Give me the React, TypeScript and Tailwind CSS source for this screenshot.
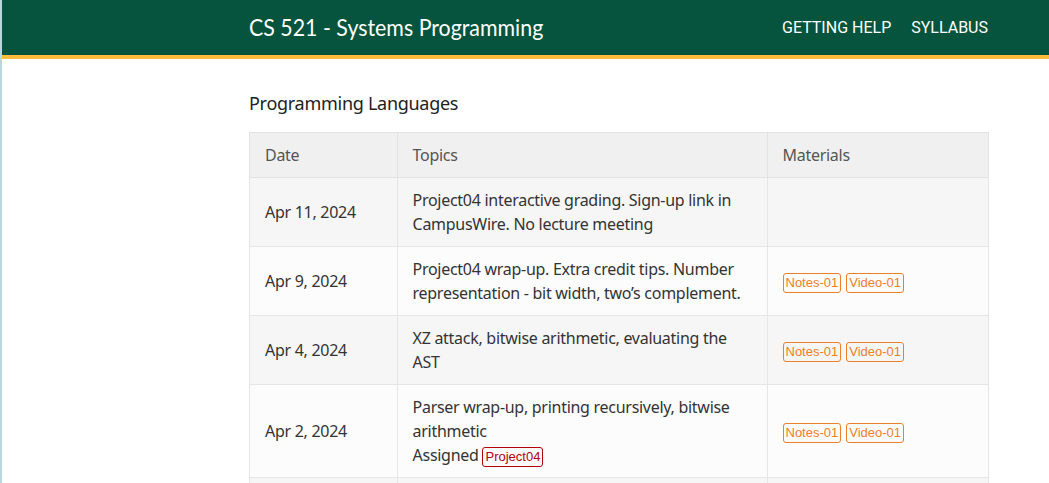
import React from "react";

const Badge = ({ children, red }: { children: React.ReactNode; red?: boolean }) => (
  <span
    className={
      "inline-block rounded-[3px] border px-[2px] text-[13px] leading-[18px] tracking-normal align-middle " +
      (red ? "border-[#b3000f] text-[#b3000f]" : "border-[#ec7f27] text-[#ec7f27]")
    }
    style={{ fontFamily: "'Liberation Sans', Arial, sans-serif" }}
  >
    {children}
  </span>
);

const rows = [
  {
    date: "Apr 11, 2024",
    topics: (
      <>
        Project04 interactive grading. Sign-up link in
        <br />
        CampusWire. No lecture meeting
      </>
    ),
    mats: false,
  },
  {
    date: "Apr 9, 2024",
    topics: (
      <>
        Project04 wrap-up. Extra credit tips. Number
        <br />
        representation - bit width, two’s complement.
      </>
    ),
    mats: true,
  },
  {
    date: "Apr 4, 2024",
    topics: (
      <>
        XZ attack, bitwise arithmetic, evaluating the
        <br />
        AST
      </>
    ),
    mats: true,
  },
  {
    date: "Apr 2, 2024",
    topics: (
      <>
        Parser wrap-up, printing recursively, bitwise
        <br />
        arithmetic
        <br />
        Assigned <Badge red>Project04</Badge>
      </>
    ),
    mats: true,
  },
];

export default function App() {
  return (
    <div className="flex h-[483px] w-full overflow-hidden bg-white">
      <div className="w-[2px] shrink-0 bg-[#b9d7df]" />
      <div className="flex-1 min-w-0">
        <header className="h-[55px] bg-[#06543d] border-b-[4px] border-[#fdbd3a] box-content">
          <div className="ml-[247px] w-[740px] h-[55px] flex items-center justify-between">
            <div
              className="text-white text-[24px] leading-none pb-[2px] origin-left scale-x-[0.89] whitespace-nowrap"
              style={{ fontFamily: "Lato, 'Noto Sans', sans-serif" }}
            >
              CS 521 - Systems Programming
            </div>
            <nav
              className="flex gap-[20px] text-white text-[16px] mr-[1px]"
              style={{ fontFamily: "Roboto, 'Liberation Sans', sans-serif" }}
            >
              <span>GETTING HELP</span>
              <span>SYLLABUS</span>
            </nav>
          </div>
        </header>
        <main
          className="ml-[247px] w-[740px] text-[#333] text-[16px] tracking-[-0.28px]"
          style={{ fontFamily: "'Noto Sans', 'Open Sans', sans-serif" }}
        >
          <h2 className="mt-[32px] mb-[17px] text-[18px] leading-[24px] text-[#222]">Programming Languages</h2>
          <table className="w-full border-collapse text-left leading-[24px]">
            <colgroup>
              <col className="w-[148px]" />
              <col className="w-[370px]" />
              <col className="w-[222px]" />
            </colgroup>
            <thead>
              <tr className="bg-[#f0f0f0] text-[#555]">
                <th className="border border-[#e3e3e3] px-[15px] py-[10px] font-normal">Date</th>
                <th className="border border-[#e3e3e3] px-[15px] py-[10px] font-normal">Topics</th>
                <th className="border border-[#e3e3e3] px-[15px] py-[10px] font-normal">Materials</th>
              </tr>
            </thead>
            <tbody>
              {rows.map((r, i) => (
                <tr key={i} className={i % 2 === 0 ? "bg-[#f6f6f6]" : "bg-[#fcfcfc]"}>
                  <td className="border border-[#e6e6e6] px-[15px] py-[10px] align-middle">{r.date}</td>
                  <td className="border border-[#e6e6e6] px-[15px] py-[10px] align-middle whitespace-nowrap">{r.topics}</td>
                  <td className="border border-[#e6e6e6] px-[15px] py-[10px] align-middle">
                    {r.mats && (
                      <span className="inline-flex gap-[5px]">
                        <Badge>Notes-01</Badge>
                        <Badge>Video-01</Badge>
                      </span>
                    )}
                  </td>
                </tr>
              ))}
              <tr className="bg-[#f6f6f6]">
                <td className="border border-[#e6e6e6] h-[60px]" />
                <td className="border border-[#e6e6e6] h-[60px]" />
                <td className="border border-[#e6e6e6] h-[60px]" />
              </tr>
            </tbody>
          </table>
        </main>
      </div>
    </div>
  );
}
